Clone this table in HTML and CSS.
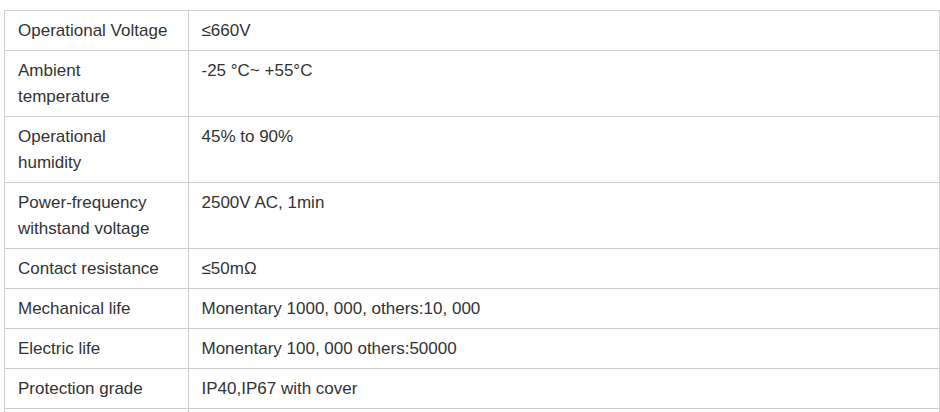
FILE: index.html
```html
<!DOCTYPE html>
<html>
<head>
<meta charset="utf-8">
<link rel="stylesheet" href="styles.css">
</head>
<body>
<table class="spec">
  <colgroup><col class="c1"><col class="c2"></colgroup>
  <tbody>
    <tr><td>Operational Voltage</td><td>≤660V</td></tr>
    <tr><td>Ambient temperature</td><td>-25 °C~ +55°C</td></tr>
    <tr><td>Operational humidity</td><td>45% to 90%</td></tr>
    <tr><td>Power-frequency withstand voltage</td><td>2500V AC, 1min</td></tr>
    <tr><td>Contact resistance</td><td>≤50mΩ</td></tr>
    <tr><td>Mechanical life</td><td>Monentary 1000, 000, others:10, 000</td></tr>
    <tr><td>Electric life</td><td>Monentary 100, 000 others:50000</td></tr>
    <tr><td>Protection grade</td><td>IP40,IP67 with cover</td></tr>
    <tr><td>&nbsp;</td><td>&nbsp;</td></tr>
  </tbody>
</table>
</body>
</html>
```
FILE: styles.css
```css
html, body {
  margin: 0;
  padding: 0;
  background: #fff;
}
body {
  padding: 10px 0 0 4px;
  font-family: "Liberation Sans", Arial, sans-serif;
  font-size: 17px;
  color: #333;
}
.spec {
  border-collapse: collapse;
  table-layout: fixed;
  width: 936px;
}
.spec .c1 { width: 184px; }
.spec td {
  border: 1px solid #cfcfcf;
  padding: 6.5px 13px 6.5px 12.5px;
  line-height: 26px;
  vertical-align: top;
  text-align: left;
}
.spec td:first-child {
  padding-left: 13px;
  padding-right: 17px;
}
```
